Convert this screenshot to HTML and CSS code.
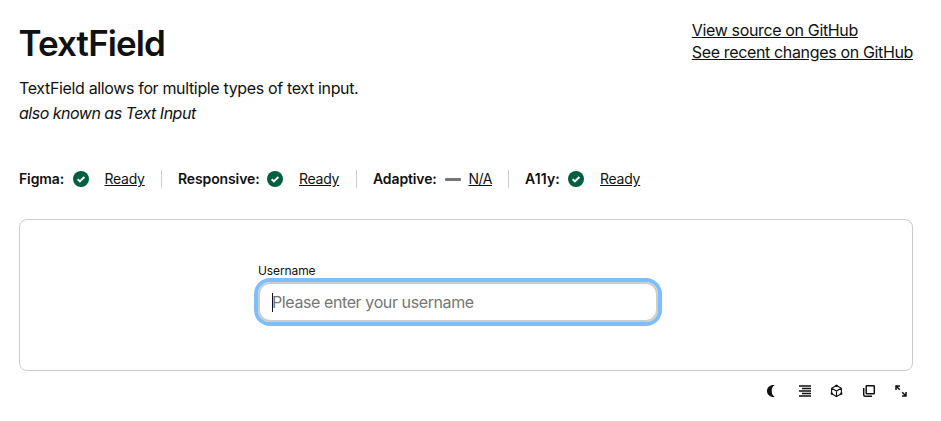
FILE: index.html
```html
<!DOCTYPE html>
<html lang="en">
<head>
<meta charset="utf-8">
<title>TextField</title>
<link rel="stylesheet" href="styles.css">
</head>
<body>
<main class="page">
  <header class="header">
    <div>
      <h1 class="title">TextField</h1>
      <p class="desc">TextField allows for multiple types of text input.</p>
      <p class="alias">also known as Text Input</p>
    </div>
    <nav class="links">
      <a href="#">View source on GitHub</a>
      <a href="#">See recent changes on GitHub</a>
    </nav>
  </header>
  <section class="statuses">
    <div class="status figma"><b>Figma:</b><svg class="check" viewBox="0 0 16 16"><circle cx="8" cy="8" r="8"/><path d="M4.700 8.200l2.200 2.200L11.400 6"/></svg><a href="#">Ready</a></div>
    <div class="status responsive"><b>Responsive:</b><svg class="check" viewBox="0 0 16 16"><circle cx="8" cy="8" r="8"/><path d="M4.700 8.200l2.200 2.200L11.400 6"/></svg><a href="#">Ready</a></div>
    <div class="status adaptive"><b>Adaptive:</b><i class="dash"></i><a href="#">N/A</a></div>
    <div class="status a11y"><b>A11y:</b><svg class="check" viewBox="0 0 16 16"><circle cx="8" cy="8" r="8"/><path d="M4.700 8.200l2.200 2.200L11.400 6"/></svg><a href="#">Ready</a></div>
  </section>
  <section class="preview">
    <div class="field">
      <label class="label">Username</label>
      <div class="input"><span class="caret"></span><span class="placeholder">Please enter your username</span></div>
    </div>
  </section>
  <div class="toolbar">
    <svg viewBox="0 0 16 16"><path class="solid" d="M9.800 2.100C7.600 3.400 6.700 5.400 6.700 8s.9 4.600 3.100 5.900C5.700 14.600 2 12 2 8s3.700-6.600 7.800-5.900z"/></svg>
    <svg class="rows" viewBox="0 0 16 16"><path d="M2 3h12M5 5.500h9M2 8h12M5 10.500h9M2 13h12"/></svg>
    <svg class="cube" viewBox="0 0 16 16"><path d="M7.500 2.500l4.900 2.800v5.400l-4.900 2.800-4.900-2.800V5.300zM2.600 5.300l4.900 2.700 4.900-2.700M7.500 8v5.500"/><path class="knobs" d="M6.300 3.200l1.200-.7 1.200.7M12.400 9.500v1.200l-1.200.7M2.600 9.500v1.200l1.200.7"/></svg>
    <svg viewBox="0 0 16 16"><rect x="5.200" y="2.700" width="8.100" height="8.100" rx=".5"/><path d="M2.700 5v6.800q0 1.500 1.500 1.500H11"/></svg>
    <svg viewBox="0 0 16 16"><path d="M3 7V3h4M3 3l3.800 3.800M13 9v4H9M13 13L9.200 9.200"/></svg>
  </div>
</main>
</body>
</html>
```
FILE: styles.css
```css
* { box-sizing: border-box; }
body { margin: 0; background: #fff; color: #111; font-family: Inter, sans-serif; }
.page { padding: 19px 28px 0 19px; }
.header { display: flex; justify-content: space-between; height: 141px; }
.title { margin: 2px 0 0 -0.5px; font-size: 35px; line-height: 44px; font-weight: 600; letter-spacing: -0.9px; }
.desc, .alias { margin: 0; font-size: 16px; line-height: 25px; letter-spacing: -0.35px; }
.desc { margin-top: 11px; }
.alias { font-style: italic; letter-spacing: -0.5px; }
.links { display: flex; flex-direction: column; font-size: 16px; line-height: 22px; letter-spacing: -0.35px; }
a { color: #111; text-decoration: underline; }
.statuses { display: flex; height: 38px; align-items: center; font-size: 14px; line-height: 18px; }
.status { display: flex; align-items: center; height: 18px; }
.status + .status { border-left: 1px solid #ccc; padding-left: 16px; }
.figma { width: 142px; }
.responsive { width: 195px; }
.adaptive { width: 152px; }
.figma b { width: 46px; }
.responsive b { width: 81px; }
.adaptive b { width: 64px; }
.status a { letter-spacing: -0.25px; }
.status b { font-weight: 600; flex: none; letter-spacing: -0.12px; }
.status.a11y b { width: 35px; letter-spacing: 0.15px; }
.check { width: 16px; height: 16px; margin: 0 16px 0 8px; fill: #005f3e; flex: none; }
.figma .check { margin-right: 15.5px; }
.check path { fill: none; stroke: #fff; stroke-width: 2; }
.dash { width: 16px; height: 3px; background: #767676; border-radius: 1px; margin: 0 7.5px 0 8px; }
.adaptive a { letter-spacing: -0.5px; }
.preview { margin-top: 21px; height: 152px; border: 1px solid #ccc; border-radius: 8px; padding: 43px 0 0 238px; }
.field { width: 400px; }
.label { display: block; font-size: 12px; line-height: 16px; letter-spacing: -0.1px; }
.input { margin-top: 3px; height: 40px; border: 2px solid #ccc; border-radius: 12px; box-shadow: 0 0 0 4px #7dbeff; display: flex; align-items: center; padding-left: 12px; font-size: 16px; letter-spacing: -0.4px; color: #767676; }
.caret { width: 1px; height: 19px; background: #111; margin-right: -1px; }
.toolbar { display: flex; justify-content: flex-end; gap: 16px; padding: 12px 4px 0 0; }
.toolbar svg { width: 16px; height: 16px; fill: none; stroke: #111; stroke-width: 1.5; }
.toolbar .cube { stroke-width: 1.1; }
.toolbar .knobs { stroke-width: 1.8; }
.toolbar .rows { stroke-width: 1.3; }
.toolbar .solid { fill: #111; stroke: none; }
```
